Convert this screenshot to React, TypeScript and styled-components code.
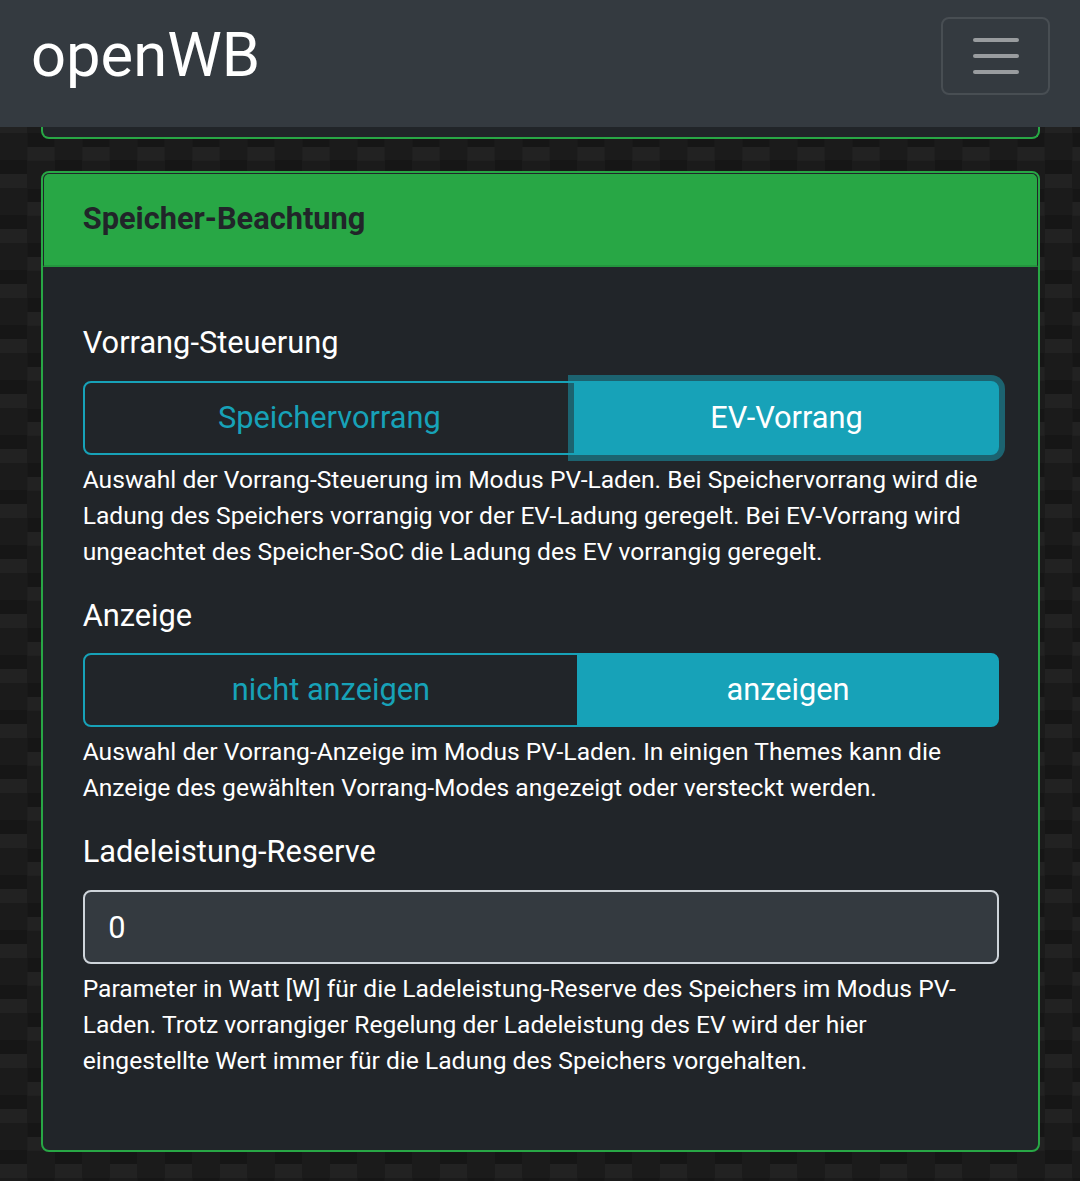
import React from 'react';
import styled, { createGlobalStyle } from 'styled-components';

const GlobalStyle = createGlobalStyle`
  html, body {
    margin: 0;
    padding: 0;
  }
  body {
    font-family: Roboto, "Liberation Sans", sans-serif;
    font-size: 24.62px;
    line-height: 36px;
    color: #fff;
    background-color: #1b1b1b;
    /* carbon weave: a dark and a light block per tile, shifted in every other column */
    background-image:
      conic-gradient(at 27.5px 13.75px, transparent 75%, #161616 75%),
      conic-gradient(at 27.5px 13.75px, transparent 75%, #222222 75%),
      conic-gradient(at 27.5px 13.75px, transparent 75%, #161616 75%),
      conic-gradient(at 27.5px 13.75px, transparent 75%, #222222 75%);
    background-size: 55px 55px;
    background-position: 27.5px 23px, 27.5px 36.75px, 0 50px, 0 9px;
  }
`;

const Page = styled.div`
  width: 1080px;
  height: 1181px;
  overflow: hidden;
`;

const Navbar = styled.header`
  height: 127px;
  background: #343a40;
  display: flex;
  align-items: center;
  justify-content: space-between;
  padding: 0 30px 0 31px;
  box-sizing: border-box;
`;

const Brand = styled.div`
  font-size: 61.5px;
  line-height: 72px;
  margin-top: -18px;
`;

const Toggler = styled.button`
  width: 109px;
  height: 78px;
  margin-top: -16px;
  background: transparent;
  border: 2px solid rgba(255, 255, 255, 0.1);
  border-radius: 8px;
  display: flex;
  flex-direction: column;
  align-items: center;
  justify-content: center;
  gap: 12px;
  padding: 0;
`;

const TogglerBar = styled.span`
  width: 46px;
  height: 4px;
  border-radius: 2px;
  background: #999c9f;
`;

const Main = styled.main`
  padding: 0 40px 0 40.7px;
`;

const CardStub = styled.div`
  height: 12px;
  box-sizing: border-box;
  background: #212529;
  border: 2px solid #28a745;
  border-top: none;
  border-radius: 0 0 8px 8px;
  margin-bottom: 32px;
`;

const Card = styled.section`
  height: 981px;
  box-sizing: border-box;
  background: #212529;
  border: 2px solid #28a745;
  border-radius: 8px;
  overflow: hidden;
`;

const CardHeader = styled.div`
  height: 94px;
  box-sizing: border-box;
  background: #28a745;
  border: 1px solid #212529;
  border-bottom: 2px solid #24963e;
  border-radius: 6px 6px 0 0;
  color: #212529;
  font-size: 30.78px;
  font-weight: 700;
  line-height: 90px;
  padding-left: 39px;
`;

const CardBody = styled.div`
  padding: 53px 39px 0 40px;
`;

const Group = styled.div`
  margin-bottom: 23px;
`;

const Label = styled.div`
  font-size: 30.78px;
  line-height: 45px;
  margin-bottom: 15.6px;
`;

const Segmented = styled.div`
  display: flex;
  height: 74px;
`;

const Segment = styled.div`
  flex: 1 1 0;
  box-sizing: border-box;
  display: flex;
  align-items: center;
  justify-content: center;
  font-size: 30.78px;
  color: #17a2b8;
  border: 2px solid #17a2b8;
  border-radius: 8px 0 0 8px;
`;

const ActiveSegment = styled(Segment)<{ $width: number; $focus?: boolean }>`
  flex: 0 0 ${(p) => p.$width}px;
  margin-left: -2px;
  color: #fff;
  background: #17a2b8;
  border-radius: 0 8px 8px 0;
  ${(p) => p.$focus && `
    position: relative;
    box-shadow: 0 0 0 6px rgba(23, 162, 184, 0.5);
  `}
`;

const Help = styled.p`
  margin: 7px 0 0;
  padding-right: 4px;
  font-size: 24.62px;
  line-height: 36px;
`;

const Input = styled.input`
  display: block;
  width: 100%;
  height: 74px;
  box-sizing: border-box;
  background: #343a40;
  border: 2px solid #ced4da;
  border-radius: 8px;
  padding: 2px 24px 0 23.6px;
  color: #fff;
  font-family: inherit;
  font-size: 30.78px;
`;

export default function App() {
  return (
    <>
      <GlobalStyle />
      <Page>
        <Navbar>
          <Brand>openWB</Brand>
          <Toggler>
            <TogglerBar />
            <TogglerBar />
            <TogglerBar />
          </Toggler>
        </Navbar>
        <Main>
          <CardStub />
          <Card>
            <CardHeader>Speicher-Beachtung</CardHeader>
            <CardBody>
              <Group>
                <Label>Vorrang-Steuerung</Label>
                <Segmented>
                  <Segment>Speichervorrang</Segment>
                  <ActiveSegment $width={425} $focus>EV-Vorrang</ActiveSegment>
                </Segmented>
                <Help>
                  Auswahl der Vorrang-Steuerung im Modus PV-Laden. Bei Speichervorrang wird die Ladung des Speichers
                  vorrangig vor der EV-Ladung geregelt. Bei EV-Vorrang wird ungeachtet des Speicher-SoC die Ladung des
                  EV vorrangig geregelt.
                </Help>
              </Group>
              <Group>
                <Label>Anzeige</Label>
                <Segmented>
                  <Segment>nicht anzeigen</Segment>
                  <ActiveSegment $width={422}>anzeigen</ActiveSegment>
                </Segmented>
                <Help>
                  Auswahl der Vorrang-Anzeige im Modus PV-Laden. In einigen Themes kann die Anzeige des gewählten
                  Vorrang-Modes angezeigt oder versteckt werden.
                </Help>
              </Group>
              <Group>
                <Label>Ladeleistung-Reserve</Label>
                <Input defaultValue="0" />
                <Help>
                  Parameter in Watt [W] für die Ladeleistung-Reserve des Speichers im Modus PV-Laden. Trotz vorrangiger
                  Regelung der Ladeleistung des EV wird der hier eingestellte Wert immer für die Ladung des Speichers
                  vorgehalten.
                </Help>
              </Group>
            </CardBody>
          </Card>
        </Main>
      </Page>
    </>
  );
}
